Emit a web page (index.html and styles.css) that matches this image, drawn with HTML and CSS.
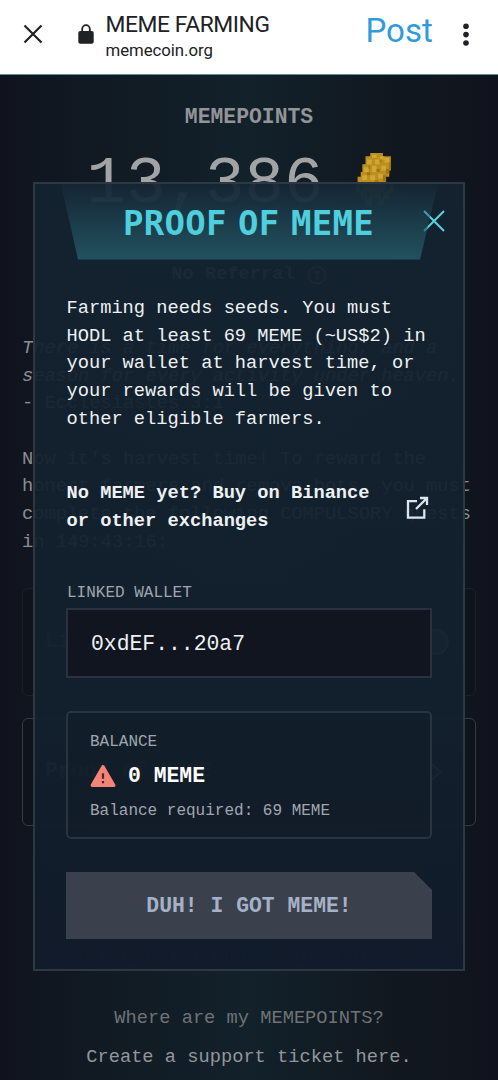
FILE: index.html
```html
<!DOCTYPE html>
<html lang="en">
<head>
<meta charset="utf-8">
<title>MEME FARMING</title>
<link rel="stylesheet" href="styles.css">
</head>
<body>
<header class="browser-bar">
  <svg class="bar-close" viewBox="0 0 20 20"><path d="M1.5 1.5l17 17M18.5 1.5l-17 17"/></svg>
  <svg class="lock" viewBox="0 0 16 20"><path d="M4.2 8V5a3.8 3.8 0 0 1 7.6 0v3" fill="none" stroke="#202124" stroke-width="1.8"/><rect x=".3" y="7" width="15.4" height="12.7" rx="2" fill="#202124"/></svg>
  <div class="site">
    <div class="site-title">MEME FARMING</div>
    <div class="site-host">memecoin.org</div>
  </div>
  <div class="post">Post</div>
  <svg class="dots" viewBox="0 0 6 24"><circle cx="3" cy="3.2" r="2.8"/><circle cx="3" cy="11.6" r="2.8"/><circle cx="3" cy="20" r="2.8"/></svg>
</header>
<main class="page">
  <h1 class="points-label">MEMEPOINTS</h1>
  <div class="points"><span>13,386</span>
    <svg class="corn" viewBox="0 0 24 34">
      <path fill="#bb8f1c" d="M9 0h8v2h5v9h-1v4h-2v5H1v-5h2v-3h1V7h2V2h3z"/>
      <path fill="#cfa637" d="M10 1h3v2h-3zM15 2h3v2h-3zM7 4h3v3H7zM12 4h3v3h-3zM18 3h3v3h-3zM5 9h3v3H5zM10 8h3v4h-3zM16 8h3v3h-3zM4 14h3v3H4zM9 14h3v3H9zM14 13h3v3h-3z"/>
      <path fill="#a3740f" d="M15 4h1v2h-1zM21 6h1v4h-1zM19 10h2v3h-2zM17 14h2v4h-2zM8 8h1v2H8zM7 12h2v2H7zM13 10h2v2h-2zM12 17h2v2h-2z"/>
      <path fill="#6f6a24" d="M0 20h3v3h4v6h3v4H6v-4H3v-4H0zM24 20h-3v3h-4v6h-3v4h4v-4h3v-4h3zM4 20h15v4h-3v5H8v-5H4z"/>
    </svg>
  </div>
  <div class="referral">No Referral <svg viewBox="0 0 20 20"><circle cx="10" cy="10" r="8.5"/><path d="M10 14.5V10M7 7h6M10 7v3"/></svg></div>
  <p class="quote"><i>There is a time for everything, and a<br>season for every activity under heaven.</i><br>- Ecclesiastes 3:1</p>
  <p class="intro">Now it's harvest time! To reward the<br>honest farmers and remove bots, you must<br>complete the following COMPULSORY quests<br>in 149:43:16:</p>
  <div class="quest quest-done"><b>Link Wallet</b><svg viewBox="0 0 24 24"><circle cx="12" cy="12" r="11" fill="#45484d"/></svg></div>
  <div class="quest"><b>Proof of MEME</b><svg viewBox="0 0 24 24"><path d="M7 4l9 8-9 8"/></svg></div>
  <p class="warning">BOTS AND SUSPICIOUS ACTIVITY WILL BE<br>FILTERED WITHOUT PRIOR NOTICE.</p>
  <p class="help">Where are my MEMEPOINTS?</p>
  <p class="ticket">Create a support ticket here.</p>
</main>
<section class="modal" role="dialog">
  <div class="modal-head">
    <div class="banner"><h2>PROOF OF MEME</h2></div>
    <svg class="modal-close" viewBox="0 0 22 22"><path d="M1 1l20 20M21 1L1 21"/></svg>
  </div>
  <p class="rule">Farming needs seeds. You must<br>HODL at least 69 MEME (~US$2) in<br>your wallet at harvest time, or<br>your rewards will be given to<br>other eligible farmers.</p>
  <div class="buy">
    <b>No MEME yet? Buy on Binance<br>or other exchanges</b>
    <svg viewBox="0 0 24 24"><path d="M12 5.2H3v16.5h16.3v-8.5M15 2h7v7M22 2L11 13"/></svg>
  </div>
  <div class="label">LINKED WALLET</div>
  <div class="wallet">0xdEF...20a7</div>
  <div class="balance">
    <div class="label">BALANCE</div>
    <div class="amount">
      <svg viewBox="0 0 26 24"><path d="M13 2.8L23.7 21.3H2.3z" fill="#f58477" stroke="#f58477" stroke-width="3.5" stroke-linejoin="round"/><path d="M13 9.2v5.6M13 17v2.2" stroke="#442a30" stroke-width="2.2"/></svg>
      <b>0 MEME</b>
    </div>
    <div class="label">Balance required: 69 MEME</div>
  </div>
  <button class="confirm">DUH! I GOT MEME!</button>
</section>
</body>
</html>
```
FILE: styles.css
```css
* { box-sizing: border-box; }
body {
  margin: 0;
  width: 498px;
  height: 1080px;
  overflow: hidden;
  position: relative;
  background: #10141e;
  font: 18.72px/27.7px "Liberation Mono", monospace;
}
p, h1, h2 { margin: 0; }
svg { display: block; flex: none; }

.browser-bar {
  display: flex;
  height: 75px;
  padding-left: 23px;
  background: #fff;
  border-bottom: 1px solid #5b9391;
  color: #202124;
  font-family: Roboto, sans-serif;
}
.bar-close { width: 20px; height: 20px; margin-top: 24px; fill: none; stroke: #202124; stroke-width: 2.2; }
.lock { width: 16px; height: 20px; margin: 24px 0 0 35px; }
.site { width: 260px; margin: 10px 0 0 11.5px; white-space: nowrap; }
.site-title { font-size: 22.8px; line-height: 29px; letter-spacing: -.4px; }
.site-host { font-size: 16.8px; line-height: 23px; letter-spacing: -.05px; }
.post { width: 68px; margin-top: 11px; color: #2f9bdb; font-size: 33px; line-height: 40px; white-space: nowrap; }
.dots { width: 6px; height: 24px; margin: 22.5px 0 0 29px; fill: #202124; }

.page {
  height: 1005px;
  padding: 28px 22px 0;
  background: linear-gradient(90deg, #10131d 0%, #111a23 20%, #12212a 50%, #111820 78%, #10131d 100%);
  color: #8b8d92;
}
.points-label { font-size: 21.4px; line-height: 28px; text-align: center; color: #929498; }
.points {
  display: flex;
  justify-content: space-between;
  height: 66px;
  margin: 21px 82px 0 64.5px;
  font-size: 65.8px;
  line-height: 66px;
  color: #a2a3a5;
}
.corn { width: 38px; height: 54px; margin: 1px 0 0; }
.referral { display: flex; justify-content: center; align-items: center; gap: 12px; margin-top: 43px; font-weight: bold; }
.referral svg { width: 20px; height: 20px; fill: none; stroke: #8b8d92; stroke-width: 1.5; }
.quote { margin-top: 46.2px; white-space: nowrap; }
.intro { margin-top: 27.7px; white-space: nowrap; }
.quest {
  display: flex;
  align-items: center;
  justify-content: space-between;
  height: 108px;
  margin-top: 22px;
  padding: 0 26px 0 22px;
  border: 1.5px solid #353b44;
  border-radius: 6px;
  background: #0f131c;
  color: #5d6066;
  font-size: 21.4px;
}
.quest-done { margin-top: 31.6px; border-color: #1b212a; color: #45484d; }
.quest svg { width: 26px; height: 26px; fill: none; stroke: #77797e; stroke-width: 2; }
.warning { margin-top: 90px; text-align: center; color: #06090f; }
.help { margin-top: 33px; text-align: center; color: #6f7376; }
.ticket { margin-top: 11.3px; text-align: center; color: #92969a; }

.modal {
  position: absolute;
  left: 33px;
  top: 182px;
  width: 432px;
  height: 789px;
  padding: 0 32px;
  border: 2px solid #2c3844;
  background: linear-gradient(180deg, rgba(20, 35, 49, .94), rgba(18, 32, 45, .94) 65%, rgba(17, 27, 43, .94));
  color: #eef1f3;
}
.modal-head { display: flex; margin: 0 -18px 0 -6px; height: 75.5px; }
.banner {
  flex: none;
  width: 377px;
  clip-path: polygon(0 0, 100% 0, 359px 100%, 17px 100%);
  background: linear-gradient(180deg, rgba(35, 75, 89, .05), #225260);
}
.banner h2 {
  padding: 19px 2px 0 0;
  color: #4fcedd;
  font: bold 34px/40px "DejaVu Sans Mono", monospace;
  word-spacing: -9.5px;
  letter-spacing: .3px;
  text-align: center;
  white-space: nowrap;
}
.modal-close { width: 22px; height: 22px; margin: 26px 0 0 -15px; fill: none; stroke: #5ad2df; stroke-width: 2; }
.rule { margin: 35.5px 0 0 -.5px; white-space: nowrap; }
.buy { display: flex; align-items: center; justify-content: space-between; margin: 46.5px 0 0 -.5px; white-space: nowrap; }
.buy svg { width: 24px; height: 24px; margin-right: 2px; fill: none; stroke: #dbe5ed; stroke-width: 2.3; }
.label { font-size: 16px; line-height: 24px; color: #a1a6ae; }
.buy + .label { margin-top: 45.5px; }
.wallet {
  height: 70px;
  margin: 3px -1px 0;
  padding: 2px 23px 0;
  border: 2px solid #29323e;
  background: #10151f;
  font-size: 21.4px;
  line-height: 65px;
}
.balance {
  height: 128px;
  margin: 33px -1px 0;
  padding: 17px 22px 0;
  border: 2px solid #28343f;
  border-radius: 5px;
  background: rgba(17, 28, 38, .45);
}
.amount { display: flex; align-items: center; gap: 12px; height: 28px; margin: 8px 0 9px; color: #fff; font-size: 21.4px; line-height: 28px; }
.amount svg { width: 26px; height: 24px; }
.confirm {
  display: block;
  width: 366px;
  height: 67px;
  margin: 33px 0 0 -1px;
  padding: 2px 0 0;
  border: 0;
  background: rgba(61, 67, 78, .96);
  clip-path: polygon(0 0, 348px 0, 100% 18px, 100% 100%, 0 100%);
  color: #a5b1c7;
  font: bold 21.4px/28px "Liberation Mono", monospace;
}
```
